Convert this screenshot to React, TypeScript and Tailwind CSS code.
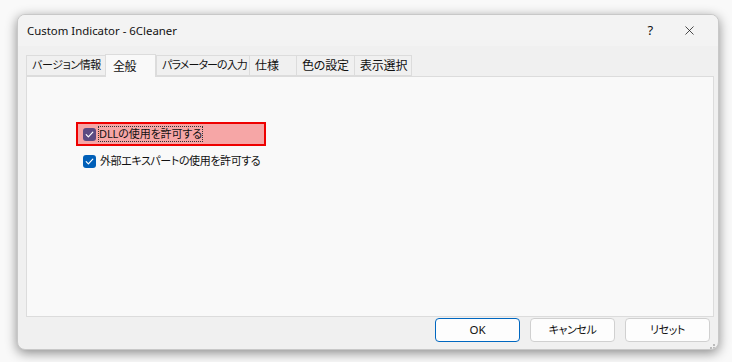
import { X } from "lucide-react";

const tabs = [
	{ label: "バージョン情報", w: "w-[80px]", t: "text-[11px]" },
	{ label: "全般", w: "w-[51px]", t: "text-[12px]", active: true },
	{ label: "パラメーターの入力", w: "w-[94px]", t: "text-[11px] tracking-[-0.9px]" },
	{ label: "仕様", w: "w-[48px]", t: "text-[12px] tracking-normal" },
	{ label: "色の設定", w: "w-[59px]", t: "text-[12px] tracking-[-0.2px]" },
	{ label: "表示選択", w: "w-[58px]", t: "text-[12px] tracking-[-0.2px]" },
];

function Check({ color }: { color: string }) {
	return (
		<span className={`flex h-[13px] w-[13px] shrink-0 items-center justify-center rounded-[3px] ${color}`}>
			<svg fill="none" height="9" viewBox="0 0 9 9" width="9">
				<path d="M1.2 4.6 3.4 6.8 7.8 2.2" stroke="white" strokeLinecap="round" strokeLinejoin="round" strokeWidth="1.2" />
			</svg>
		</span>
	);
}

export default function App() {
	return (
		<div className="h-[362px] w-[732px] overflow-hidden bg-[#f9f9f9] pt-[14px] pl-[17px] font-['Segoe_UI','Noto_Sans','Noto_Sans_CJK_JP',sans-serif] text-[11px] tracking-[-0.4px] text-[#111] [font-feature-settings:'palt']">
			<div className="flex h-[336px] w-[702px] flex-col overflow-hidden rounded-[8px] border border-[#c8c8c8] bg-[#f0f0f0] shadow-[0_3px_12px_rgba(0,0,0,0.45)]">
				{/* title bar */}
				<div className="flex h-[31px] shrink-0 items-center bg-[#f3f3f3] pl-[9px]">
					<span className="flex-1 pt-[1px] text-[11.4px] tracking-normal">Custom Indicator - 6Cleaner</span>
					<span className="w-[20px] text-center text-[13px]">?</span>
					<span className="flex w-[58px] justify-center">
						<X size={15} strokeWidth={1.2} />
					</span>
				</div>

				{/* tabs */}
				<div className="mt-[7px] flex h-[23px] shrink-0 items-end pl-[8px]">
					{tabs.map((t) =>
						t.active ? (
							<div
								className={`${t.w} ${t.t} relative z-10 -mb-px flex h-[23px] items-start border border-b-0 border-[#dcdcdc] bg-[#f9f9f9] pt-[3px] pl-[7px]`}
								key={t.label}
							>
								{t.label}
							</div>
						) : (
							<div
								className={`${t.w} ${t.t} -mr-px flex h-[21px] items-center border border-[#dcdcdc] bg-[#f0f0f0] pl-[5px] whitespace-nowrap`}
								key={t.label}
							>
								{t.label}
							</div>
						),
					)}
				</div>

				{/* panel */}
				<div className="ml-[8px] h-[241px] w-[688px] shrink-0 border border-[#dcdcdc] bg-[#f9f9f9] pt-[45px] pl-[49px]">
					<div className="flex h-[24px] w-[190px] items-center border-2 border-[#ee0000] bg-[#f6a6a6] pl-[5px]">
						<Check color="bg-[#5c4a82]" />
						<span className="ml-[3px] leading-[14px] tracking-[-0.1px] outline-1 outline-dotted outline-[#333]">DLLの使用を許可する</span>
					</div>
					<div className="mt-[4px] flex h-[22px] items-center pl-[7px]">
						<Check color="bg-[#005fb8]" />
						<span className="ml-[4px]">外部エキスパートの使用を許可する</span>
					</div>
				</div>

				{/* buttons */}
				<div className="mt-[1px] flex gap-[10px] pl-[417px]">
					<button className="h-[24px] w-[85px] rounded-[4px] border border-[#0067c0] bg-[#fdfdfd] text-center text-[11.5px] tracking-normal">OK</button>
					<button className="h-[24px] w-[85px] rounded-[4px] border border-[#d0d0d0] bg-[#fdfdfd] text-center">キャンセル</button>
					<button className="h-[24px] w-[85px] rounded-[4px] border border-[#d0d0d0] bg-[#fdfdfd] text-center">リセット</button>
				</div>
				<div className="mr-[3px] mt-[2px] grid grid-cols-3 gap-[1px] self-end">
					<span />
					<span />
					<span className="h-[2px] w-[2px] bg-[#bbb]" />
					<span />
					<span className="h-[2px] w-[2px] bg-[#bbb]" />
					<span className="h-[2px] w-[2px] bg-[#bbb]" />
				</div>
			</div>
		</div>
	);
}
